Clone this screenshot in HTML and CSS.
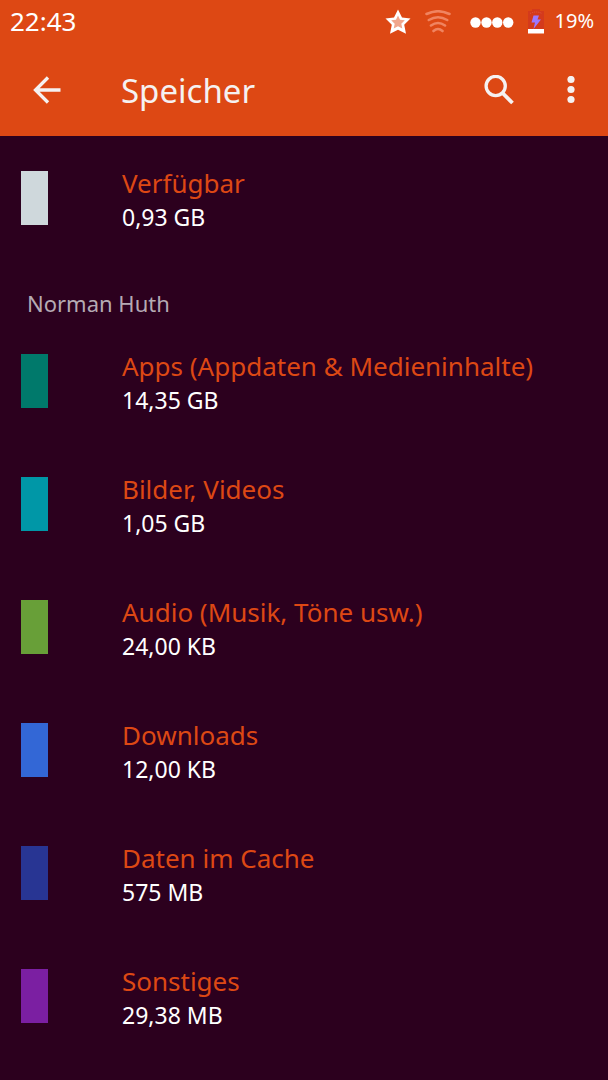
FILE: index.html
```html
<!DOCTYPE html>
<html lang="de">
<head>
<meta charset="utf-8">
<meta name="viewport" content="width=device-width, initial-scale=1">
<title>Speicher</title>
<link rel="stylesheet" href="styles.css">
</head>
<body>
<header class="top">
  <div class="status">
    <time class="clock">22:43</time>
    <div class="indicators">
      <svg class="star" viewBox="0 0 26 26" width="26" height="26" aria-hidden="true">
        <path fill="#fff" d="M13 0.500l4 8 8.500 1-6.300 6.300 1.800 9-8-4-8 4 1.800-9L0.500 9.500l8.500-1z"/>
        <path fill="#f0a68c" d="M13 6.500l2 4.200 4.800.6-3.500 3.400 1 4.800-4.300-2.300-4.300 2.300 1-4.800-3.500-3.400 4.800-.6z"/>
      </svg>
      <svg class="wifi" viewBox="0 0 26 24" width="26" height="24" fill="none" stroke="#f08460" stroke-width="2.600" stroke-linecap="round" aria-hidden="true">
        <path d="M1.500 4Q13-1.500 24.500 4M3.800 10Q13 4.500 22.200 10M6 15.500Q13 10.500 20 15.500M8.500 21Q13 17 17.500 21"/>
      </svg>
      <svg class="signal" viewBox="0 0 44 12" width="44" height="12" fill="#fff" aria-hidden="true">
        <circle cx="5.500" cy="6.500" r="5.200"/><circle cx="16.500" cy="6.500" r="5.200"/><circle cx="27.300" cy="6.500" r="5.200"/><circle cx="38.200" cy="6.500" r="5.200"/>
      </svg>
      <svg class="battery" viewBox="0 0 18 26" width="18" height="26" aria-hidden="true">
        <path fill="#d43a1c" d="M5 0h8v2h4v18H1V2h4z"/>
        <path fill="none" stroke="#e05a42" stroke-dasharray="1 1" d="M3 4.500Q9 1.500 15 4.500"/>
        <path fill="#9c78ff" d="M6.500 6.500H12l-1.500 4H14L6.500 20 8 13.500H4.500z"/>
        <path fill="#fff" d="M1 20h16v4.500H1z"/>
      </svg>
      <span class="percent">19%</span>
    </div>
  </div>
  <div class="toolbar">
    <button class="icon-button back" aria-label="Zurück">
      <svg viewBox="0 0 28 28" width="28" height="28" fill="none" stroke="#f5f1f1" stroke-width="3.300" aria-hidden="true"><path d="M15 1.500L2.500 14 15 26.500M2.500 14H27.500"/></svg>
    </button>
    <h1 class="title">Speicher</h1>
    <button class="icon-button" aria-label="Suchen">
      <svg viewBox="0 0 30 30" width="30" height="30" fill="none" stroke="#f5f1f1" stroke-width="3.300" aria-hidden="true"><circle cx="11.700" cy="11" r="9.600"/><path stroke-width="3.800" d="M18.500 18L28.500 28"/></svg>
    </button>
    <button class="icon-button" aria-label="Weitere Optionen">
      <svg viewBox="0 0 8 28" width="8" height="28" fill="#f5f1f1" aria-hidden="true"><circle cx="4" cy="3.500" r="3.600"/><circle cx="4" cy="13.500" r="3.600"/><circle cx="4" cy="23.500" r="3.600"/></svg>
    </button>
  </div>
</header>
<main>
  <ul class="list">
    <li class="row"><span class="swatch free"></span><div class="text"><span class="label">Verfügbar</span><span class="value">0,93 GB</span></div></li>
  </ul>
  <h2 class="section">Norman Huth</h2>
  <ul class="list">
    <li class="row"><span class="swatch apps"></span><div class="text"><span class="label">Apps (Appdaten &amp; Medieninhalte)</span><span class="value">14,35 GB</span></div></li>
    <li class="row"><span class="swatch images"></span><div class="text"><span class="label">Bilder, Videos</span><span class="value">1,05 GB</span></div></li>
    <li class="row"><span class="swatch audio"></span><div class="text"><span class="label">Audio (Musik, Töne usw.)</span><span class="value">24,00 KB</span></div></li>
    <li class="row"><span class="swatch downloads"></span><div class="text"><span class="label">Downloads</span><span class="value">12,00 KB</span></div></li>
    <li class="row"><span class="swatch cache"></span><div class="text"><span class="label">Daten im Cache</span><span class="value">575 MB</span></div></li>
    <li class="row"><span class="swatch misc"></span><div class="text"><span class="label">Sonstiges</span><span class="value">29,38 MB</span></div></li>
  </ul>
</main>
</body>
</html>
```
FILE: styles.css
```css
* { box-sizing: border-box; }

body {
  margin: 0;
  min-height: 100vh;
  background: #2c001e;
  color: #fff;
  font-family: "Noto Sans", "Open Sans", sans-serif;
}

.top { background: #dd4814; }

.status {
  display: flex;
  align-items: center;
  justify-content: space-between;
  height: 44px;
  padding: 0 14px 0 10px;
}

.clock { font-size: 26px; line-height: 42px; padding-bottom: 2px; }

.indicators { display: flex; align-items: center; }

.star { margin-right: 14px; }
.wifi { margin-right: 19px; }
.signal { margin-right: 13px; }
.battery { margin-right: 10px; }
.percent { font-size: 20px; line-height: 28px; padding-bottom: 2px; }

.toolbar {
  display: flex;
  align-items: center;
  height: 92px;
  padding: 0 13px 0 23px;
}

.icon-button {
  display: flex;
  align-items: center;
  justify-content: center;
  width: 48px;
  height: 48px;
  padding: 0;
  border: 0;
  background: none;
}

.icon-button + .icon-button { margin-left: 24px; }

.title {
  flex: 1;
  margin: 0 0 0 50px;
  font-size: 33px;
  font-weight: 400;
  color: #f5f1f1;
}

.list {
  margin: 0;
  padding: 0;
  list-style: none;
}

.row {
  display: flex;
  align-items: center;
  gap: 74px;
  height: 123px;
  padding: 0 21px;
}

.swatch {
  flex: none;
  width: 27px;
  height: 54px;
}

.free { background: #cfd8dc; }
.apps { background: #00796b; }
.images { background: #0097a7; }
.audio { background: #689f38; }
.downloads { background: #3367d6; }
.cache { background: #283593; }
.misc { background: #7b1fa2; }

.text {
  display: flex;
  flex-direction: column;
  padding-top: 4px;
  line-height: 34px;
}

.label {
  font-size: 26px;
  color: #dd4814;
}

.value { font-size: 23px; }

.section {
  margin: 0;
  padding: 28px 27px 0;
  font-size: 22px;
  font-weight: 400;
  line-height: 32px;
  color: #b5aab3;
}
```
